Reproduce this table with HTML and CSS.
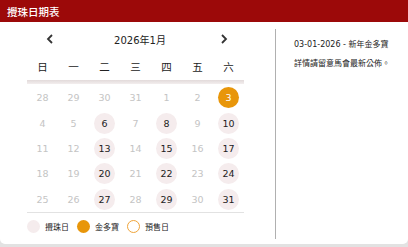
FILE: index.html
```html
<!DOCTYPE html>
<html lang="zh-Hant">
<head>
<meta charset="utf-8">
<link rel="stylesheet" href="styles.css">
</head>
<body>
<div class="card">
  <div class="header">攪珠日期表</div>
  <div class="main">
    <div class="cal">
      <div class="nav">
        <span class="arrow"><svg width="8" height="10" viewBox="0 0 8 10"><path d="M6 1 L2 5 L6 9" fill="none" stroke="#333" stroke-width="1.8"/></svg></span>
        <span class="title">2026年1月</span>
        <span class="arrow"><svg width="8" height="10" viewBox="0 0 8 10"><path d="M2 1 L6 5 L2 9" fill="none" stroke="#333" stroke-width="1.8"/></svg></span>
      </div>
      <div class="weekdays">
        <span>日</span><span>一</span><span>二</span><span>三</span><span>四</span><span>五</span><span>六</span>
      </div>
      <div class="shade"></div>
      <div class="days">
        <span class="d"><i>28</i></span><span class="d"><i>29</i></span><span class="d"><i>30</i></span><span class="d"><i>31</i></span><span class="d"><i>1</i></span><span class="d"><i>2</i></span><span class="d"><i class="gold">3</i></span>
        <span class="d"><i>4</i></span><span class="d"><i>5</i></span><span class="d"><i class="draw">6</i></span><span class="d"><i>7</i></span><span class="d"><i class="draw">8</i></span><span class="d"><i>9</i></span><span class="d"><i class="draw">10</i></span>
        <span class="d"><i>11</i></span><span class="d"><i>12</i></span><span class="d"><i class="draw">13</i></span><span class="d"><i>14</i></span><span class="d"><i class="draw">15</i></span><span class="d"><i>16</i></span><span class="d"><i class="draw">17</i></span>
        <span class="d"><i>18</i></span><span class="d"><i>19</i></span><span class="d"><i class="draw">20</i></span><span class="d"><i>21</i></span><span class="d"><i class="draw">22</i></span><span class="d"><i>23</i></span><span class="d"><i class="draw">24</i></span>
        <span class="d"><i>25</i></span><span class="d"><i>26</i></span><span class="d"><i class="draw">27</i></span><span class="d"><i>28</i></span><span class="d"><i class="draw">29</i></span><span class="d"><i>30</i></span><span class="d"><i class="draw">31</i></span>
      </div>
      <div class="legend">
        <span class="dot dot-draw"></span><span class="lbl">攪珠日</span>
        <span class="dot dot-gold"></span><span class="lbl">金多寶</span>
        <span class="dot dot-pre"></span><span class="lbl">預售日</span>
      </div>
    </div>
    <div class="info">
      <p>03-01-2026 - 新年金多寶</p>
      <p>詳情請留意馬會最新公佈。</p>
    </div>
  </div>
</div>
</body>
</html>
```
FILE: styles.css
```css
html, body {
  margin: 0;
  padding: 0;
}
body {
  background: #e2e2e2;
  font-family: "DejaVu Sans", "Noto Sans CJK TC", sans-serif;
  color: #222;
}
.card {
  width: 408px;
  height: 244px;
  background: #fff;
  border-radius: 0 0 5px 5px;
  overflow: hidden;
}
.header {
  height: 22px;
  background: #9c0909;
  color: #fff;
  font-size: 10.5px;
  line-height: 23px;
  padding-left: 7px;
  font-family: "Noto Sans CJK TC", sans-serif;
  font-weight: 500;
}
.main {
  display: flex;
  padding-top: 7px;
  height: 210px;
}
.cal {
  width: 217px;
  padding-left: 27px;
  padding-right: 31px;
}
.nav {
  height: 20px;
  display: flex;
  align-items: center;
  padding: 0 14px 0 17px;
}
.arrow {
  width: 12px;
  display: flex;
  justify-content: center;
}
.title {
  flex: 1;
  text-align: center;
  font-size: 10px;
  padding-left: 6px;
  color: #222;
}
.weekdays {
  display: grid;
  grid-template-columns: repeat(7, 1fr);
  padding-top: 4px;
  height: 27px;
  line-height: 27px;
  text-align: center;
  font-size: 10.5px;
  font-family: "Noto Sans CJK TC", sans-serif;
  color: #222;
}
.shade {
  height: 4px;
  background: linear-gradient(#e2dada, #f3eeee);
}
.days {
  margin-top: 1px;
  display: grid;
  grid-template-columns: repeat(7, 1fr);
  grid-auto-rows: 25.4px;
  border-bottom: 1px solid #e2e2e2;
}
.d {
  display: flex;
  align-items: center;
  justify-content: center;
}
.d i {
  font-style: normal;
  width: 21px;
  height: 21px;
  line-height: 21px;
  text-align: center;
  border-radius: 50%;
  font-size: 9.5px;
  color: #c4c4c4;
}
.d i.draw {
  background: #f5eced;
  color: #222;
}
.d i.gold {
  background: #e8960a;
  color: #fff;
}
.legend {
  display: flex;
  align-items: center;
  height: 26px;
  padding-top: 1px;
  font-size: 8px;
  font-family: "Noto Sans CJK TC", sans-serif;
  color: #222;
}
.dot {
  width: 13px;
  height: 13px;
  border-radius: 50%;
  box-sizing: border-box;
  margin-right: 5px;
}
.dot-draw { background: #f5eced; }
.dot-gold { background: #e8960a; }
.dot-pre { border: 1.5px solid #efa43a; background: #fff; }
.lbl { margin-right: 8px; }
.info {
  border-left: 1px solid #b0b0b0;
  flex: 1;
  padding-left: 18px;
  padding-top: 6px;
  font-size: 8px;
  color: #222;
}
.info p {
  margin: 0;
  line-height: 19px;
}
```
